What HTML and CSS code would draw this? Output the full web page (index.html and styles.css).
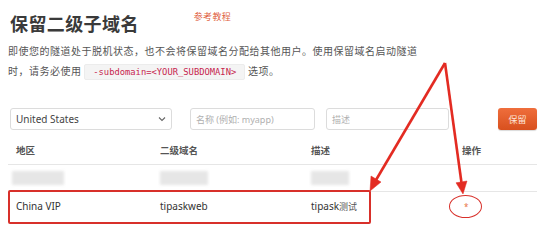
FILE: index.html
```html
<!DOCTYPE html>
<html lang="zh">
<head>
<meta charset="utf-8">
<link rel="stylesheet" href="styles.css">
</head>
<body>
<div class="page">
  <div class="head">
    <h1 class="title">保留二级子域名</h1>
    <span class="ref">参考教程</span>
  </div>
  <p class="desc">即使您的隧道处于脱机状态，也不会将保留域名分配给其他用户。使用保留域名启动隧道<br>时，请务必使用 <code class="code">-subdomain=&lt;YOUR_SUBDOMAIN&gt;</code> 选项。</p>
  <div class="form">
    <div class="field select">
      <span>United States</span>
      <svg class="chev" width="8" height="6" viewBox="0 0 8 6"><path d="M1 1.5 L4 4.5 L7 1.5" fill="none" stroke="#666" stroke-width="1.1"/></svg>
    </div>
    <div class="field name"><span class="ph">名称 (例如: myapp)</span></div>
    <div class="field note"><span class="ph">描述</span></div>
    <div class="btn">保留</div>
  </div>
  <div class="table">
    <div class="row th">
      <div class="c1">地区</div><div class="c2">二级域名</div><div class="c3">描述</div><div class="c4">操作</div>
    </div>
    <div class="row blur">
      <div class="c1"><span class="blob b1"></span></div><div class="c2"><span class="blob b2"></span></div><div class="c3"><span class="blob b3"></span></div><div class="c4"></div>
    </div>
    <div class="row td">
      <div class="c1">China VIP</div><div class="c2">tipaskweb</div><div class="c3">tipask<span class="cjk">测试</span></div><div class="c4"><span class="star">*</span></div>
    </div>
  </div>
  <div class="mark-box"></div>
  <div class="mark-ellipse"></div>
  <svg class="arrows" width="554" height="238" viewBox="0 0 554 238">
    <g fill="#e32b22" stroke="#e32b22">
      <line x1="445" y1="63" x2="376" y2="180" stroke-width="2.6"/>
      <polygon points="370,191 381,182 371,176" stroke-width="0.5"/>
      <line x1="445" y1="63" x2="461.4" y2="182" stroke-width="2.6"/>
      <polygon points="463,194 467,181 456,182.8" stroke-width="0.5"/>
    </g>
  </svg>
</div>
</body>
</html>
```
FILE: styles.css
```css
* { box-sizing: border-box; }
html, body { margin: 0; padding: 0; background: #fff; }
body {
  width: 554px;
  height: 238px;
  overflow: hidden;
  font-family: "Noto Sans", "Noto Sans CJK SC", sans-serif;
  color: #333;
}
.page {
  position: relative;
  width: 554px;
  height: 238px;
  padding: 0 17px 0 8px;
}
.head {
  display: flex;
  align-items: flex-start;
  padding-top: 11px;
  padding-left: 2px;
}
.title {
  margin: 0;
  font-family: "Noto Sans CJK SC", sans-serif;
  font-size: 18px;
  line-height: 24px;
  font-weight: 700;
  letter-spacing: 0.4px;
  color: #3a3a3a;
}
.ref {
  margin-left: 55px;
  margin-top: 0px;
  font-family: "Noto Sans CJK SC", sans-serif;
  font-size: 9px;
  line-height: 12px;
  color: #e0603e;
  letter-spacing: 0.3px;
}
.desc {
  margin: 6px 0 0 0;
  font-family: "Noto Sans CJK SC", sans-serif;
  font-size: 10px;
  line-height: 20px;
  letter-spacing: 0.5px;
  color: #555;
}
.code {
  display: inline-block;
  font-family: "DejaVu Sans Mono", monospace;
  font-size: 8.8px;
  line-height: 14px;
  padding: 0 8px;
  letter-spacing: 0;
  background: #f4f4f4;
  border: 1px solid #ececec;
  border-radius: 2px;
  color: #c7254e;
}
.form {
  display: flex;
  align-items: center;
  margin-top: 27px;
  margin-left: 2px;
  height: 22px;
}
.field {
  height: 22px;
  border: 1px solid #dcdcdc;
  border-radius: 3px;
  display: flex;
  align-items: center;
  padding-left: 5px;
  font-size: 10px;
  color: #444;
}
.select { width: 162px; justify-content: space-between; padding-right: 5px; }
.name { width: 125px; margin-left: 18px; }
.note { width: 123px; margin-left: 11px; }
.ph { color: #b0b0b0; font-size: 9px; font-family: "Noto Sans", "Noto Sans CJK SC", sans-serif; }
.btn {
  margin-left: 49px;
  width: 39px;
  height: 22px;
  border-radius: 3px;
  background: linear-gradient(#ef6e3c, #d8501e);
  color: #fde6da;
  font-family: "Noto Sans CJK SC", sans-serif;
  font-size: 9px;
  display: flex;
  align-items: center;
  justify-content: center;
  box-shadow: 0 1px 1px rgba(0,0,0,0.15);
}
.table {
  margin-top: 11px;
  width: 529px;
}
.row {
  display: flex;
  align-items: center;
}
.row > div { padding-left: 8px; }
.c1 { width: 144px; }
.c2 { width: 151px; }
.c3 { width: 151px; }
.c4 { width: 83px; }
.th {
  height: 24px;
  padding-bottom: 5px;
  border-bottom: 1px solid #e6e6e6;
  font-family: "Noto Sans CJK SC", sans-serif;
  font-size: 9.5px;
  font-weight: 700;
  color: #555;
}
.blur {
  height: 27px;
  border-bottom: 1px solid #e6e6e6;
}
.blob {
  display: block;
  height: 14px;
  background: #e6e6e6;
  filter: blur(1.8px);
}
.b1 { width: 52px; margin-left: -4px; }
.b2 { width: 48px; margin-left: 0px; }
.b3 { width: 38px; margin-left: 0px; }
.td {
  height: 30px;
  padding-bottom: 3px;
  font-size: 10px;
  color: #333;
}
.cjk { font-family: "Noto Sans CJK SC", sans-serif; font-size: 9px; color: #555; }
.star { color: #e8703e; font-size: 8px; margin-left: 2px; }
.mark-box {
  position: absolute;
  left: 8px;
  top: 190px;
  width: 363px;
  height: 34px;
  border: 2px solid #d8302a;
  border-radius: 2px;
}
.mark-ellipse {
  position: absolute;
  left: 449px;
  top: 195px;
  width: 33px;
  height: 23px;
  border: 1.6px solid #d8302a;
  border-radius: 50%;
}
.arrows {
  position: absolute;
  left: 0;
  top: 0;
  pointer-events: none;
}
```
